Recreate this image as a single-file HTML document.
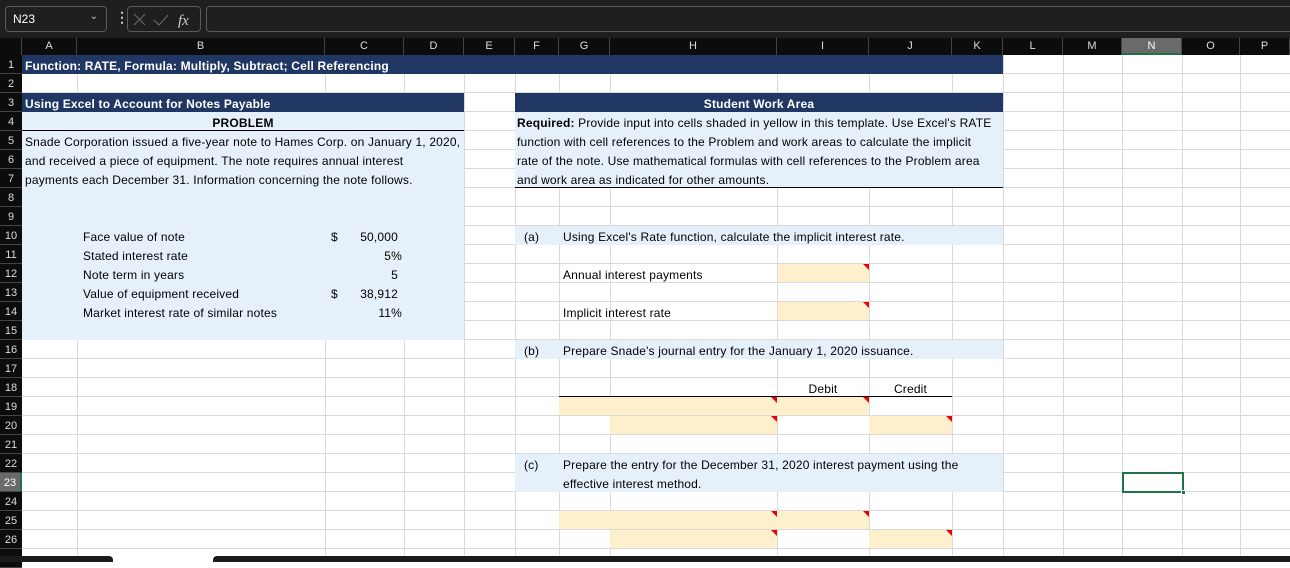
<!DOCTYPE html>
<html><head><meta charset="utf-8"><style>
*{margin:0;padding:0;box-sizing:border-box}
body{width:1290px;height:562px;overflow:hidden;background:#fff;position:relative;font-family:"Liberation Sans",sans-serif;font-size:12px;color:#000}
.a{position:absolute}
.grid{position:absolute;left:22px;top:55px;width:1268px;height:500px;background-image:repeating-linear-gradient(to bottom,transparent 0,transparent 18px,#dadada 18px,#dadada 19px)}
.v{position:absolute;top:55px;width:1px;height:500px;background:#dadada}
.t{position:absolute;white-space:nowrap;line-height:19px;height:19px;font-size:12px;letter-spacing:0.18px;padding-top:2px}
.rn{position:absolute;left:0;width:22px;height:19px;line-height:21px;color:#ddd;font-size:11px;text-align:center;background:#0c0c0c;border-bottom:1px solid #444}
.ch{position:absolute;top:38px;height:17px;line-height:17px;color:#ddd;font-size:11px;text-align:center;background:#0c0c0c;border-right:1px solid #444}
.navy{background:#203764;color:#fff;font-weight:bold}
.lb{background:#e6f0fa}
.y{background:#fff0cd;position:absolute;height:18px}
.tri{position:absolute;width:0;height:0;border-top:6px solid #e00;border-left:6px solid transparent}
</style></head><body>
<div class="a" style="left:0;top:0;width:1290px;height:38px;background:#1f1f1f"></div>
<div class="a" style="left:5px;top:6px;width:102px;height:26px;border:1px solid #5a5a5a;border-radius:4px;color:#fff;font-size:12px;line-height:24px;padding-left:7px">N23<span style="position:absolute;right:8px;top:-2px;color:#ccc;font-size:10px">&#8964;</span></div>
<div class="a" style="left:115px;top:9px;color:#ccc;font-size:14px;font-weight:bold">&#8942;</div>
<div class="a" style="left:127px;top:6px;width:74px;height:26px;border:1px solid #5a5a5a;border-radius:4px"></div>
<svg class="a" style="left:132px;top:12px" width="66" height="16"><path d="M2 2L13 13M13 2L2 13" stroke="#666" stroke-width="1.2"/><path d="M22 8L27 13L36 3" stroke="#666" stroke-width="1.2" fill="none"/><text x="46" y="13" fill="#ccc" font-family="Liberation Serif" font-style="italic" font-size="15">fx</text></svg>
<div class="a" style="left:206px;top:6px;width:1090px;height:26px;border:1px solid #5a5a5a;border-radius:4px"></div>
<div class="grid"></div>
<div class="v" style="left:77px"></div><div class="v" style="left:325px"></div><div class="v" style="left:404px"></div><div class="v" style="left:464px"></div><div class="v" style="left:515px"></div><div class="v" style="left:559px"></div><div class="v" style="left:610px"></div><div class="v" style="left:777px"></div><div class="v" style="left:869px"></div><div class="v" style="left:952px"></div><div class="v" style="left:1003px"></div><div class="v" style="left:1063px"></div><div class="v" style="left:1122px"></div><div class="v" style="left:1182px"></div><div class="v" style="left:1240px"></div>
<div class="a" style="left:0;top:38px;width:22px;height:17px;background:#0c0c0c;border-right:1px solid #444"></div>
<div class="ch" style="left:22px;width:55px">A</div><div class="ch" style="left:77px;width:248px">B</div><div class="ch" style="left:325px;width:79px">C</div><div class="ch" style="left:404px;width:60px">D</div><div class="ch" style="left:464px;width:51px">E</div><div class="ch" style="left:515px;width:44px">F</div><div class="ch" style="left:559px;width:51px">G</div><div class="ch" style="left:610px;width:167px">H</div><div class="ch" style="left:777px;width:92px">I</div><div class="ch" style="left:869px;width:83px">J</div><div class="ch" style="left:952px;width:51px">K</div><div class="ch" style="left:1003px;width:60px">L</div><div class="ch" style="left:1063px;width:59px">M</div><div class="ch" style="left:1122px;width:60px;background:#6a6a6a;border-bottom:2px solid #217346;color:#fff">N</div><div class="ch" style="left:1182px;width:58px">O</div><div class="ch" style="left:1240px;width:50px">P</div>
<div class="rn" style="top:55px">1</div><div class="rn" style="top:74px">2</div><div class="rn" style="top:93px">3</div><div class="rn" style="top:112px">4</div><div class="rn" style="top:131px">5</div><div class="rn" style="top:150px">6</div><div class="rn" style="top:169px">7</div><div class="rn" style="top:188px">8</div><div class="rn" style="top:207px">9</div><div class="rn" style="top:226px">10</div><div class="rn" style="top:245px">11</div><div class="rn" style="top:264px">12</div><div class="rn" style="top:283px">13</div><div class="rn" style="top:302px">14</div><div class="rn" style="top:321px">15</div><div class="rn" style="top:340px">16</div><div class="rn" style="top:359px">17</div><div class="rn" style="top:378px">18</div><div class="rn" style="top:397px">19</div><div class="rn" style="top:416px">20</div><div class="rn" style="top:435px">21</div><div class="rn" style="top:454px">22</div><div class="rn" style="top:473px;background:#6a6a6a;color:#fff;border-right:2px solid #217346">23</div><div class="rn" style="top:492px">24</div><div class="rn" style="top:511px">25</div><div class="rn" style="top:530px">26</div><div class="rn" style="top:549px"></div>
<div class="a navy" style="left:22px;top:55px;width:981px;height:19px"></div>
<div class="a navy" style="left:22px;top:93px;width:442px;height:19px"></div>
<div class="a navy" style="left:515px;top:93px;width:488px;height:19px"></div>
<div class="a lb" style="left:22px;top:112px;width:442px;height:228px"></div>
<div class="a" style="left:22px;top:130px;width:442px;height:1px;background:#000"></div>
<div class="a lb" style="left:515px;top:112px;width:488px;height:76px"></div>
<div class="a" style="left:515px;top:187px;width:488px;height:1px;background:#000"></div>
<div class="a lb" style="left:515px;top:226px;width:488px;height:19px"></div>
<div class="a lb" style="left:515px;top:340px;width:488px;height:19px"></div>
<div class="a lb" style="left:515px;top:454px;width:488px;height:38px"></div>
<div class="a" style="left:559px;top:396px;width:393px;height:1px;background:#000"></div>
<div class="y" style="left:778px;top:264px;width:91px"></div><div class="tri" style="left:863px;top:264px"></div>
<div class="y" style="left:778px;top:302px;width:91px"></div><div class="tri" style="left:863px;top:302px"></div>
<div class="y" style="left:559px;top:397px;width:310px"></div><div class="tri" style="left:771px;top:397px"></div><div class="tri" style="left:863px;top:397px"></div>
<div class="y" style="left:610px;top:416px;width:167px"></div><div class="y" style="left:869px;top:416px;width:83px"></div><div class="tri" style="left:771px;top:416px"></div><div class="tri" style="left:946px;top:416px"></div>
<div class="y" style="left:559px;top:511px;width:310px"></div><div class="tri" style="left:771px;top:511px"></div><div class="tri" style="left:863px;top:511px"></div>
<div class="y" style="left:610px;top:530px;width:167px"></div><div class="y" style="left:869px;top:530px;width:83px"></div><div class="tri" style="left:771px;top:530px"></div><div class="tri" style="left:946px;top:530px"></div>
<div class="t" style="left:25px;top:55px;color:#fff;font-weight:bold">Function: RATE, Formula: Multiply, Subtract; Cell Referencing</div>
<div class="t" style="left:25px;top:93px;color:#fff;font-weight:bold">Using Excel to Account for Notes Payable</div>
<div class="t" style="left:515px;top:93px;width:488px;text-align:center;color:#fff;font-weight:bold">Student Work Area</div>
<div class="t" style="left:22px;top:112px;width:442px;text-align:center;font-weight:bold">PROBLEM</div>
<div class="t" style="left:25px;top:131px">Snade Corporation issued a five-year note to Hames Corp. on January 1, 2020,</div>
<div class="t" style="left:25px;top:150px">and received a piece of equipment. The note requires annual interest</div>
<div class="t" style="left:25px;top:169px">payments each December 31. Information concerning the note follows.</div>
<div class="t" style="left:83px;top:226px">Face value of note</div>
<div class="t" style="left:83px;top:245px">Stated interest rate</div>
<div class="t" style="left:83px;top:264px">Note term in years</div>
<div class="t" style="left:83px;top:283px">Value of equipment received</div>
<div class="t" style="left:83px;top:302px">Market interest rate of similar notes</div>
<div class="t" style="left:331px;top:226px">$</div><div class="t" style="left:331px;top:283px">$</div>
<div class="t" style="left:340px;top:226px;width:58px;text-align:right">50,000</div>
<div class="t" style="left:340px;top:245px;width:62px;text-align:right">5%</div>
<div class="t" style="left:340px;top:264px;width:58px;text-align:right">5</div>
<div class="t" style="left:340px;top:283px;width:58px;text-align:right">38,912</div>
<div class="t" style="left:340px;top:302px;width:62px;text-align:right">11%</div>
<div class="t" style="left:517px;top:112px"><b>Required:</b> Provide input into cells shaded in yellow in this template. Use Excel's RATE</div>
<div class="t" style="left:517px;top:131px">function with cell references to the Problem and work areas to calculate the implicit</div>
<div class="t" style="left:517px;top:150px">rate of the note. Use mathematical formulas with cell references to the Problem area</div>
<div class="t" style="left:517px;top:169px">and work area as indicated for other amounts.</div>
<div class="t" style="left:524px;top:226px">(a)</div><div class="t" style="left:563px;top:226px">Using Excel's Rate function, calculate the implicit interest rate.</div>
<div class="t" style="left:563px;top:264px">Annual interest payments</div>
<div class="t" style="left:563px;top:302px">Implicit interest rate</div>
<div class="t" style="left:524px;top:340px">(b)</div><div class="t" style="left:563px;top:340px">Prepare Snade's journal entry for the January 1, 2020 issuance.</div>
<div class="t" style="left:777px;top:378px;width:92px;text-align:center">Debit</div>
<div class="t" style="left:869px;top:378px;width:83px;text-align:center">Credit</div>
<div class="t" style="left:524px;top:454px">(c)</div><div class="t" style="left:563px;top:454px">Prepare the entry for the December 31, 2020 interest payment using the</div>
<div class="t" style="left:563px;top:473px">effective interest method.</div>
<div class="a" style="left:1122px;top:472px;width:62px;height:21px;border:2px solid #217346"></div>
<div class="a" style="left:1181px;top:490px;width:5px;height:5px;background:#217346;border:1px solid #fff"></div>
<div class="a" style="left:0;top:556px;width:113px;height:6px;background:#1a1a1a;border-radius:0 4px 0 0"></div>
<div class="a" style="left:113px;top:556px;width:100px;height:6px;background:#fff"></div>
<div class="a" style="left:213px;top:556px;width:1077px;height:6px;background:#1a1a1a;border-radius:4px 0 0 0"></div>
</body></html>
